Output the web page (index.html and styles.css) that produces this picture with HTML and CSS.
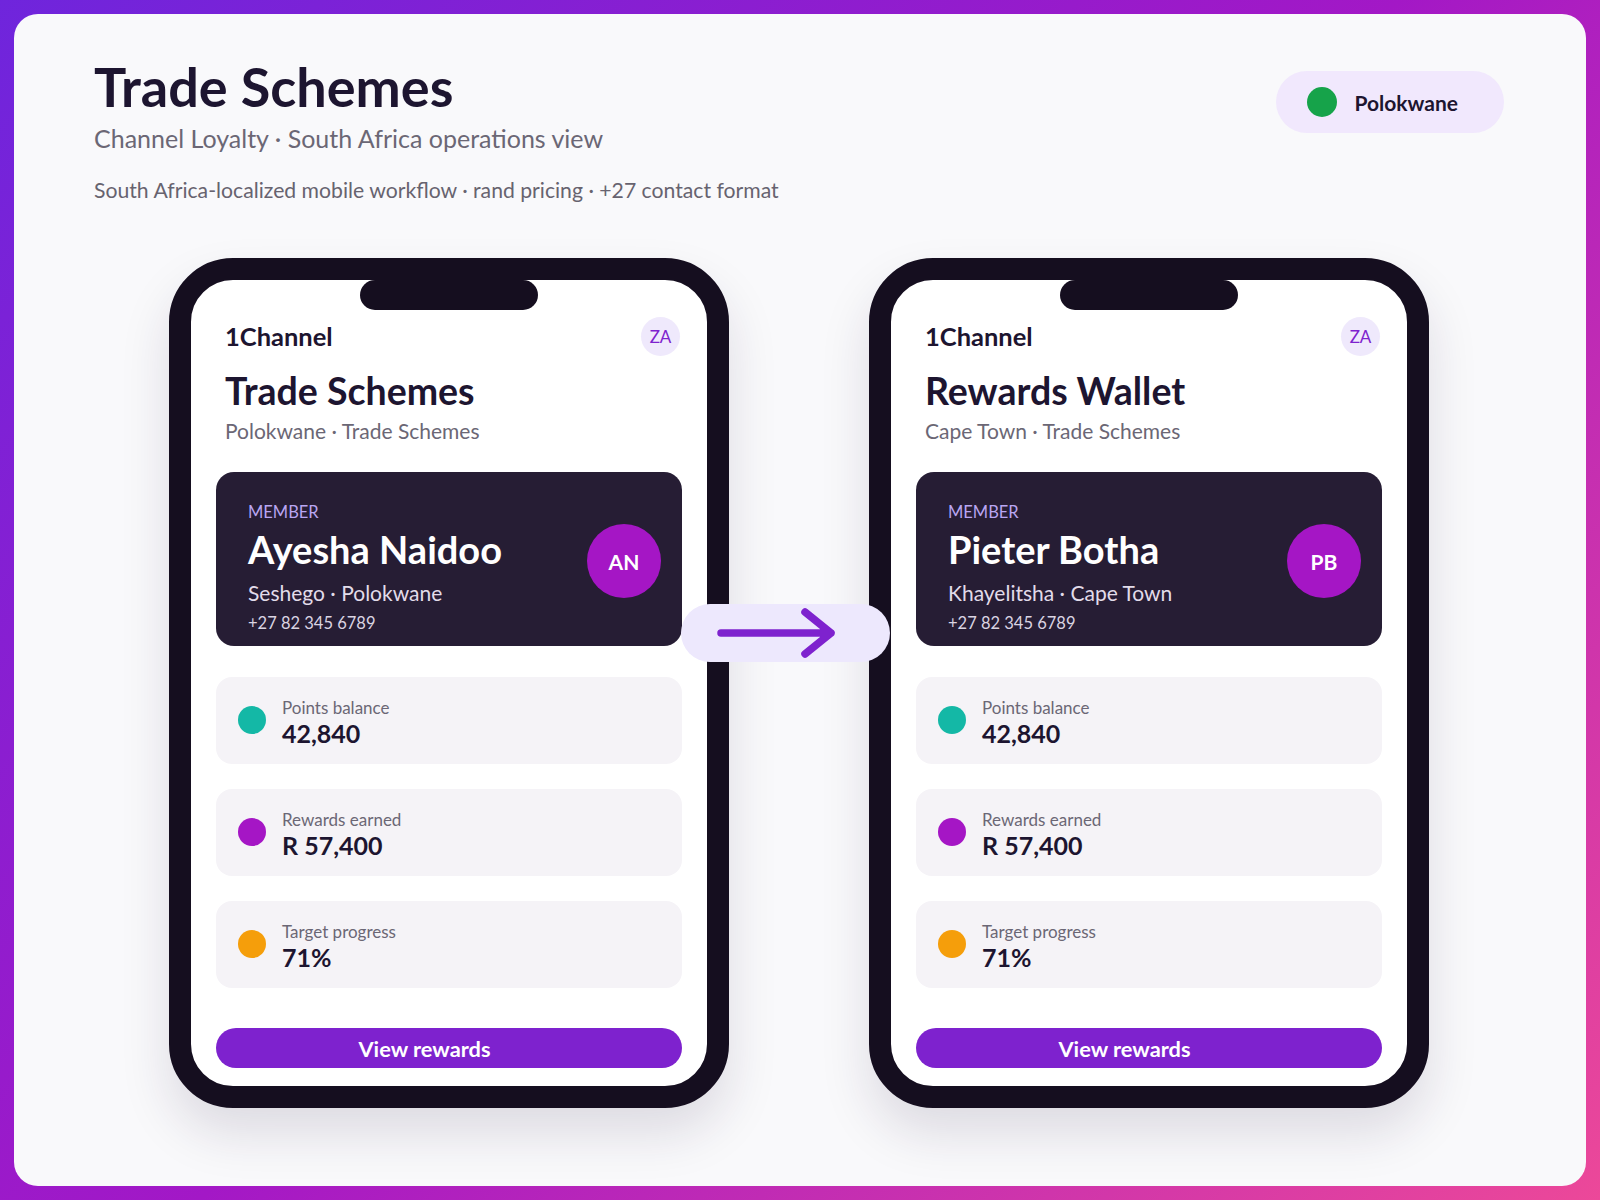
FILE: index.html
```html
<!DOCTYPE html>
<html lang="en">
<head>
  <meta charset="UTF-8" />
  <meta name="viewport" content="width=device-width, initial-scale=1.0"/>
  <title>Trade Schemes</title>
  <link rel="stylesheet" href="styles.css">
</head>
<body>
  <div class="frame">
    <div class="board">
      <div class="top">
        <div class="intro">
          <h1>Trade Schemes</h1>
          <div class="sub">Channel Loyalty · South Africa operations view</div>
          <div class="note">South Africa-localized mobile workflow · rand pricing · +27 contact format</div>
        </div>
        <div class="region">
          <span class="region-dot"></span>
          <span>Polokwane</span>
        </div>
      </div>

      <div class="flow">
        <div class="phone">
          <div class="notch"></div>
          <div class="app-head">
            <div class="brand">1Channel</div>
            <div class="country">ZA</div>
          </div>
          <div class="screen-title">Trade Schemes</div>
          <div class="screen-sub">Polokwane · Trade Schemes</div>
          <div class="member">
            <div class="member-info">
              <div class="member-label">MEMBER</div>
              <div class="member-name">Ayesha Naidoo</div>
              <div class="member-place">Seshego · Polokwane</div>
              <div class="member-phone">+27 82 345 6789</div>
            </div>
            <div class="avatar">AN</div>
          </div>
          <div class="stat">
            <span class="dot teal"></span>
            <div>
              <div class="stat-label">Points balance</div>
              <div class="stat-value">42,840</div>
            </div>
          </div>
          <div class="stat">
            <span class="dot purple"></span>
            <div>
              <div class="stat-label">Rewards earned</div>
              <div class="stat-value">R 57,400</div>
            </div>
          </div>
          <div class="stat">
            <span class="dot orange"></span>
            <div>
              <div class="stat-label">Target progress</div>
              <div class="stat-value">71%</div>
            </div>
          </div>
          <button class="btn-rewards">View rewards</button>
        </div>

        <div class="phone">
          <div class="notch"></div>
          <div class="app-head">
            <div class="brand">1Channel</div>
            <div class="country">ZA</div>
          </div>
          <div class="screen-title">Rewards Wallet</div>
          <div class="screen-sub">Cape Town · Trade Schemes</div>
          <div class="member">
            <div class="member-info">
              <div class="member-label">MEMBER</div>
              <div class="member-name">Pieter Botha</div>
              <div class="member-place">Khayelitsha · Cape Town</div>
              <div class="member-phone">+27 82 345 6789</div>
            </div>
            <div class="avatar">PB</div>
          </div>
          <div class="stat">
            <span class="dot teal"></span>
            <div>
              <div class="stat-label">Points balance</div>
              <div class="stat-value">42,840</div>
            </div>
          </div>
          <div class="stat">
            <span class="dot purple"></span>
            <div>
              <div class="stat-label">Rewards earned</div>
              <div class="stat-value">R 57,400</div>
            </div>
          </div>
          <div class="stat">
            <span class="dot orange"></span>
            <div>
              <div class="stat-label">Target progress</div>
              <div class="stat-value">71%</div>
            </div>
          </div>
          <button class="btn-rewards">View rewards</button>
        </div>

        <div class="flow-arrow">
          <svg width="209" height="58" viewBox="0 0 209 58">
            <path d="M40 29 H150 M124 8 L150 29 L124 50" fill="none" stroke="#7e22ce" stroke-width="7.5" stroke-linecap="round" stroke-linejoin="round"/>
          </svg>
        </div>
      </div>
    </div>
  </div>
</body>
</html>
```

FILE: styles.css
```css
body 
{
  margin: 0;
  font-family: 'Lato', 'Segoe UI', sans-serif;
  color: #1d1530;
}
.frame 
{
  width: 1600px;
  height: 1200px;
  box-sizing: border-box;
  padding: 14px;
  background: linear-gradient(135deg, #6f25dc 0%, #a318c6 50%, #ec4899 100%);
}
.board 
{
  height: 100%;
  box-sizing: border-box;
  background: #f9f9fb;
  border-radius: 24px;
  padding: 41px 82px 0 80px;
}
.top 
{
  display: flex;
  justify-content: space-between;
  align-items: flex-start;
}
.intro h1 
{
  margin: 0;
  font-size: 54px;
  line-height: 1.2;
  font-weight: 700;
  color: #1d1530;
}
.intro .sub 
{
  margin-top: 3px;
  font-size: 25px;
  line-height: 1.2;
  color: #6b6775;
}
.intro .note 
{
  margin-top: 25px;
  font-size: 21.2px;
  line-height: 1.2;
  color: #67636f;
}
.region 
{
  margin-top: 16px;
  height: 62px;
  box-sizing: border-box;
  padding: 0 46px 0 31px;
  border-radius: 31px;
  background: #f1e8fd;
  display: flex;
  align-items: center;
  gap: 17px;
  font-size: 21px;
  font-weight: 700;
}
.region-dot 
{
  width: 30px;
  height: 30px;
  border-radius: 50%;
  background: #16a34a;
}
.flow 
{
  position: relative;
  width: fit-content;
  margin: 55px auto 0;
  display: flex;
  gap: 140px;
}
.phone 
{
  position: relative;
  width: 560px;
  height: 850px;
  box-sizing: border-box;
  border: 22px solid #150e1f;
  border-radius: 64px;
  background: #fff;
  padding: 37px 25px 18px;
  display: flex;
  flex-direction: column;
  box-shadow: 0 26px 50px rgba(40, 20, 60, 0.13);
}
.notch 
{
  position: absolute;
  top: 0;
  left: 50%;
  margin-left: -89px;
  width: 178px;
  height: 30px;
  border-radius: 15px;
  background: #150e1f;
}
.app-head 
{
  display: flex;
  justify-content: space-between;
  align-items: center;
  padding: 0 2px 0 9px;
}
.brand 
{
  font-size: 25.5px;
  line-height: 1.2;
  font-weight: 700;
}
.country 
{
  width: 39px;
  height: 39px;
  border-radius: 50%;
  background: #efe9fc;
  color: #7e22ce;
  font-size: 17px;
  display: flex;
  align-items: center;
  justify-content: center;
}
.screen-title 
{
  margin-top: 11.5px;
  padding-left: 9px;
  font-size: 37.5px;
  line-height: 1.2;
  font-weight: 700;
}
.screen-sub 
{
  margin-top: 5px;
  padding-left: 9px;
  font-size: 21px;
  line-height: 1.2;
  color: #6b6775;
}
.member 
{
  margin-top: 29px;
  height: 174px;
  box-sizing: border-box;
  padding: 31.5px 21px 0 32px;
  border-radius: 18px;
  background: #261d34;
  display: flex;
  justify-content: space-between;
  align-items: flex-start;
}
.member-label 
{
  font-size: 16.5px;
  line-height: 1.2;
  color: #b9a6f2;
  margin-bottom: 4px;
}
.member-name 
{
  font-size: 38px;
  line-height: 1.2;
  font-weight: 700;
  color: #fff;
  margin-bottom: 7px;
}
.member-place 
{
  font-size: 21px;
  line-height: 1.2;
  color: #e2dcea;
  margin-bottom: 9px;
}
.member-phone 
{
  font-size: 16.5px;
  line-height: 1.2;
  color: #dad4e2;
}
.avatar 
{
  margin-top: 21px;
  width: 74px;
  height: 74px;
  border-radius: 50%;
  background: #a516c5;
  color: #fff;
  font-size: 21px;
  font-weight: 700;
  display: flex;
  align-items: center;
  justify-content: center;
}
.stat 
{
  margin-top: 25px;
  height: 87px;
  box-sizing: border-box;
  padding: 5px 22px 0;
  border-radius: 16px;
  background: #f5f3f7;
  display: flex;
  align-items: center;
  gap: 16px;
}
.member + .stat 
{
  margin-top: 31px;
}
.dot 
{
  width: 28px;
  height: 28px;
  margin-top: -5px;
  border-radius: 50%;
  flex-shrink: 0;
}
.dot.teal 
{
  background: #14b8a6;
}
.dot.purple 
{
  background: #a516c5;
}
.dot.orange 
{
  background: #f59e0b;
}
.stat-label 
{
  font-size: 17px;
  line-height: 1.2;
  color: #6b6775;
  margin-bottom: -1px;
}
.stat-value 
{
  font-size: 25px;
  line-height: 1.2;
  font-weight: 700;
}
.btn-rewards 
{
  margin-top: auto;
  height: 40px;
  border: none;
  border-radius: 20px;
  padding: 1px 49px 0 0;
  background: #7e22ce;
  color: #fff;
  font-family: inherit;
  font-size: 21.8px;
  font-weight: 700;
  cursor: pointer;
}
.flow-arrow 
{
  position: absolute;
  left: 512px;
  top: 346px;
  width: 209px;
  height: 58px;
  border-radius: 29px;
  background: #ede8fd;
}
.flow-arrow svg 
{
  display: block;
}
```
